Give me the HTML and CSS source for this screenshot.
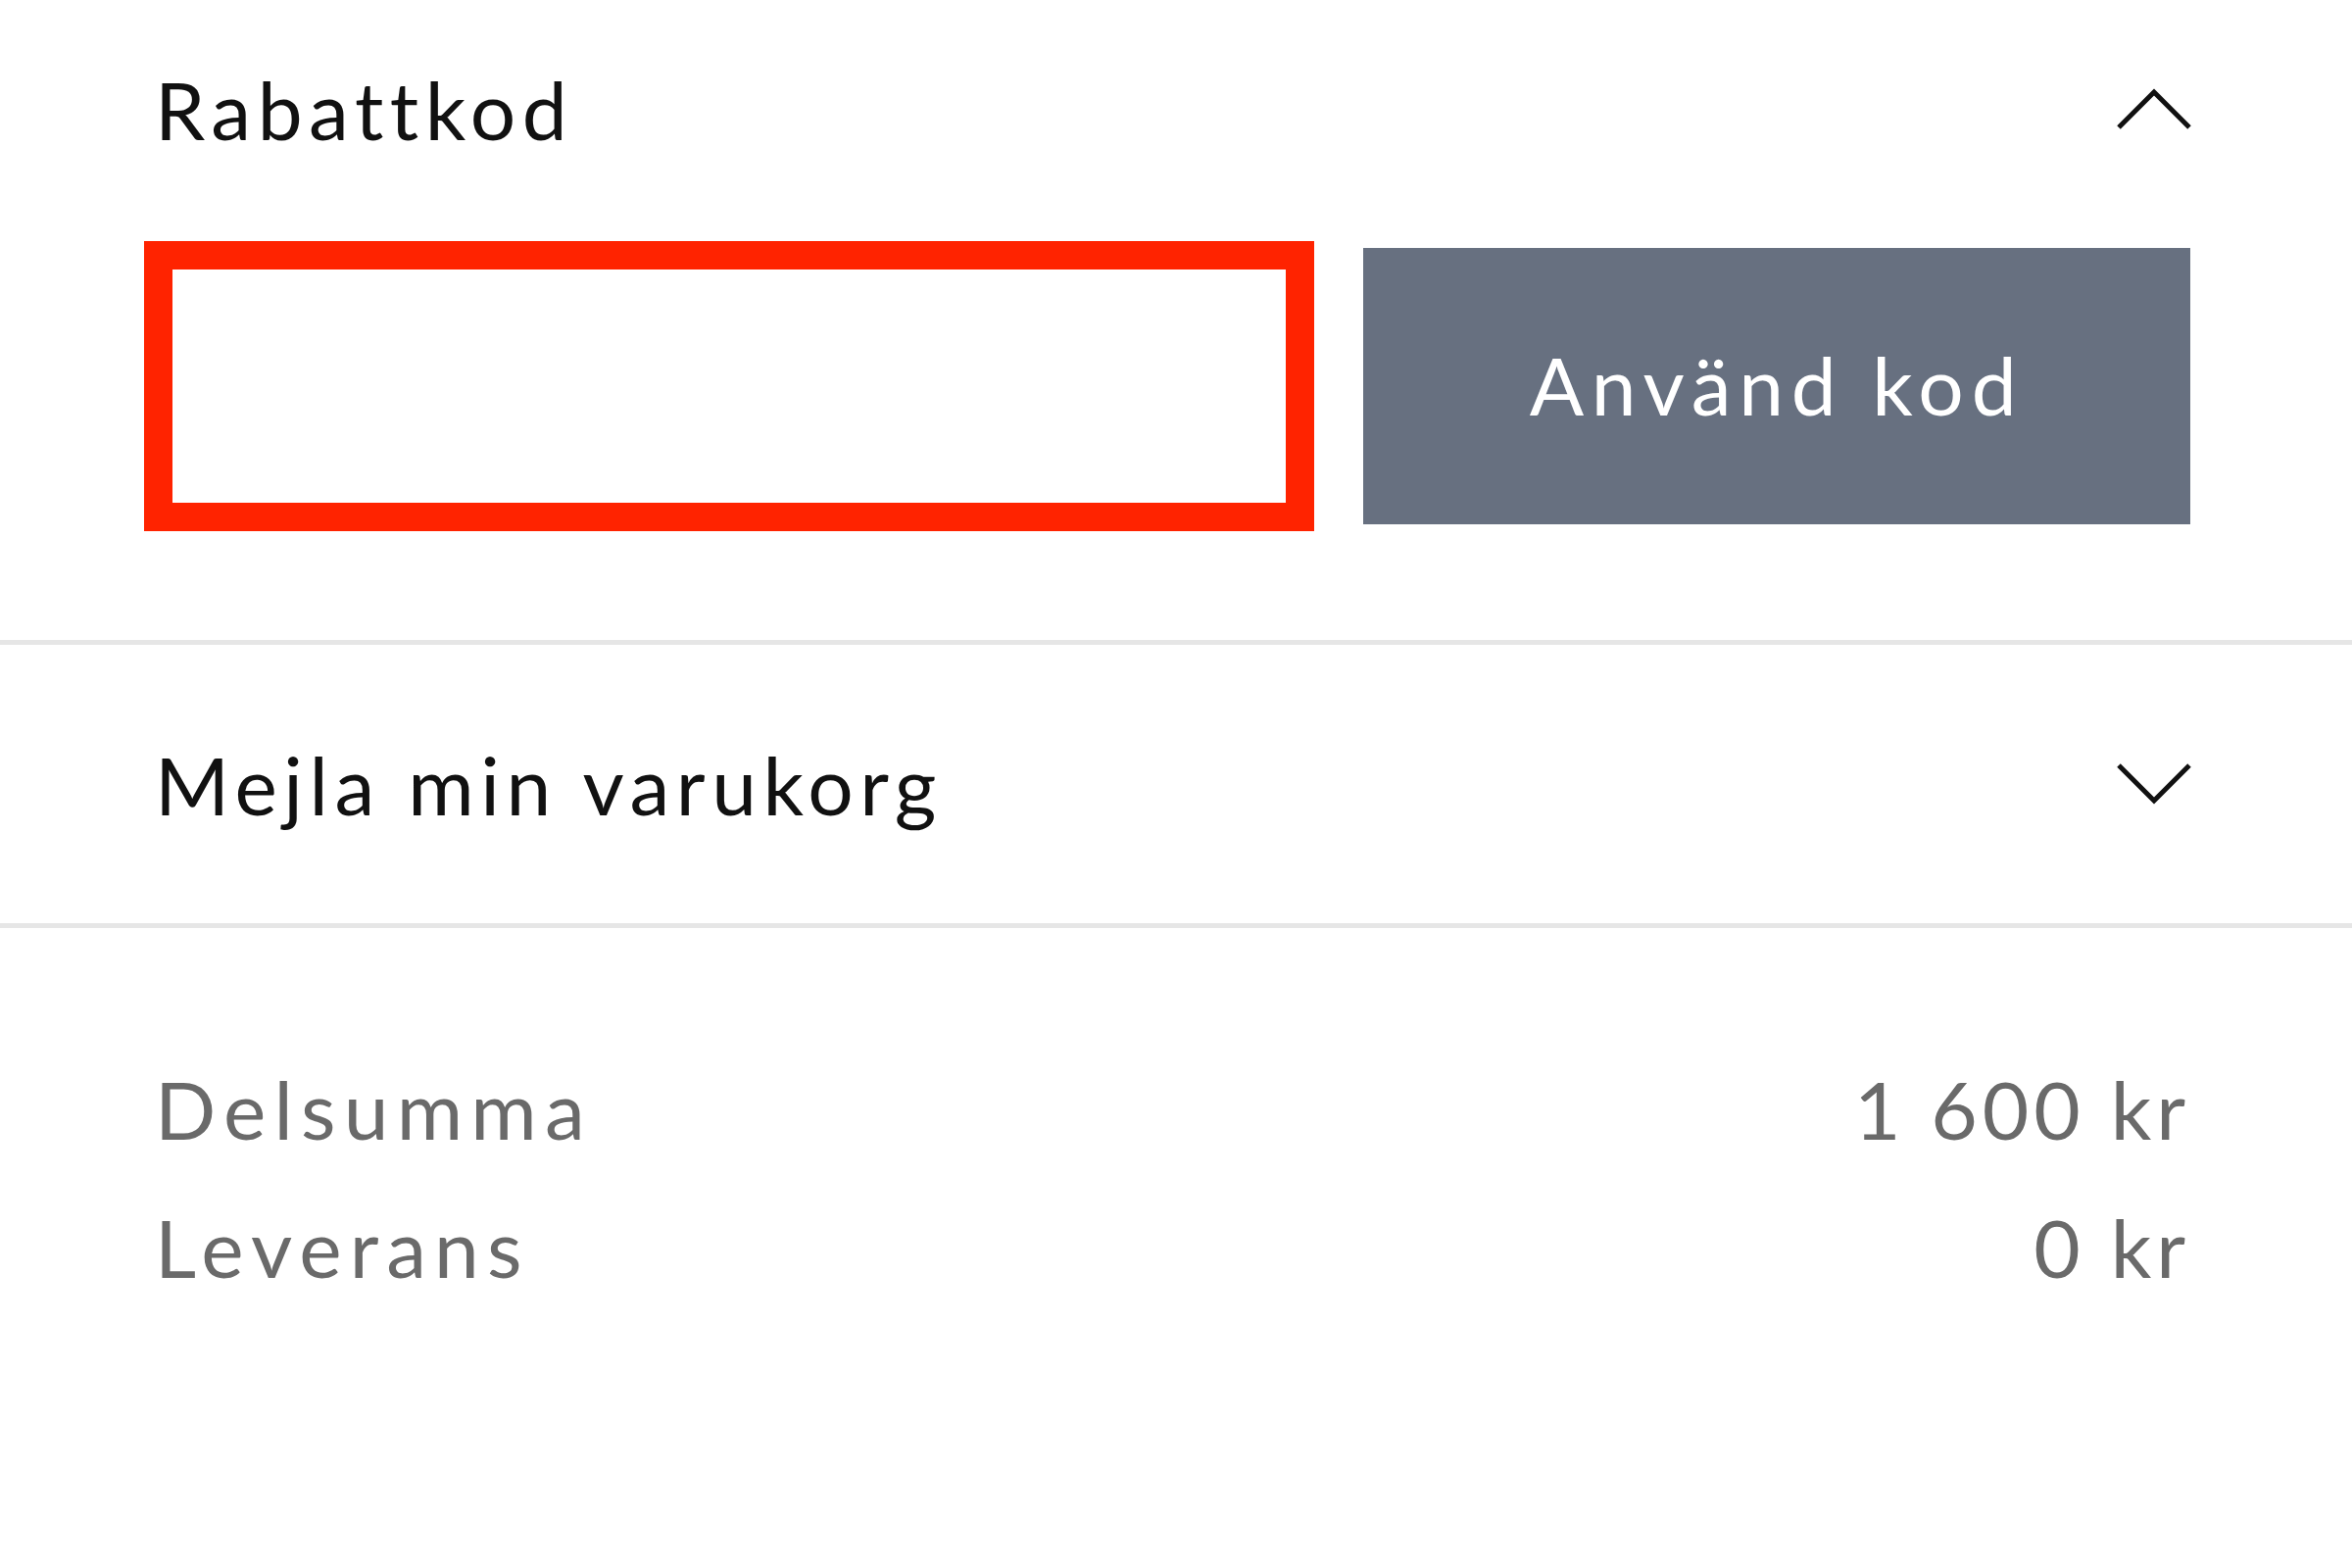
FILE: index.html
```html
<!DOCTYPE html>
<html lang="sv">
<head>
    <meta charset="UTF-8">
    <meta name="viewport" content="width=device-width, initial-scale=1.0">
    <title>Varukorg</title>
    <link rel="stylesheet" href="styles.css">
</head>
<body>
    <div class="panel coupon">
        <div class="panel-head">
            <span class="panel-title">Rabattkod</span>
            <svg class="chevron" viewBox="0 0 80 46" width="80" height="46">
                <polyline points="4,42 40,6 76,42" fill="none" stroke="#111" stroke-width="5"/>
            </svg>
        </div>
        <form class="coupon-form">
            <input type="text" class="coupon-input" name="code">
            <button type="submit" class="coupon-btn">Använd kod</button>
        </form>
    </div>

    <div class="panel mail">
        <div class="panel-head">
            <span class="panel-title">Mejla min varukorg</span>
            <svg class="chevron" viewBox="0 0 80 46" width="80" height="46">
                <polyline points="4,4 40,40 76,4" fill="none" stroke="#111" stroke-width="5"/>
            </svg>
        </div>
    </div>

    <div class="totals">
        <div class="total-row">
            <span class="total-label">Delsumma</span>
            <span>1 600 kr</span>
        </div>
        <div class="total-row">
            <span class="total-label">Leverans</span>
            <span>0 kr</span>
        </div>
    </div>
</body>
</html>
```

FILE: styles.css
```css
body {
    margin: 0;
    background: #fff;
    font-family: Lato, "Open Sans", sans-serif;
    font-size: 82px;
    color: #111;
}
.panel {
    padding: 0 165px 0 158px;
    border-bottom: 5px solid #e6e6e6;
}
.panel-head {
    display: flex;
    justify-content: space-between;
    align-items: center;
    height: 222px;
}
.mail .panel-head {
    height: 284px;
}
.panel-title {
    letter-spacing: 0.08em;
}
.chevron {
    display: block;
    margin-right: -3px;
}
.coupon {
    padding-bottom: 111px;
}
.coupon-form {
    display: flex;
    align-items: center;
    gap: 50px;
    margin-top: 24px;
    margin-left: -11px;
}
.coupon-input {
    box-sizing: border-box;
    width: 1194px;
    height: 296px;
    border: 29px solid #ff2300;
    background: #fff;
    outline: none;
    margin: 0;
}
.coupon-btn {
    flex: 1;
    height: 282px;
    padding-bottom: 6px;
    border: none;
    background-color: #677080;
    color: #fff;
    font-family: inherit;
    font-size: 82px;
    letter-spacing: 0.095em;
    cursor: pointer;
}
.totals {
    padding: 113px 165px 0 158px;
    color: #6a6a6a;
}
.total-row {
    display: flex;
    justify-content: space-between;
    height: 141px;
    align-items: center;
    letter-spacing: 0.06em;
}
.total-label {
    letter-spacing: 0.1em;
}
```
